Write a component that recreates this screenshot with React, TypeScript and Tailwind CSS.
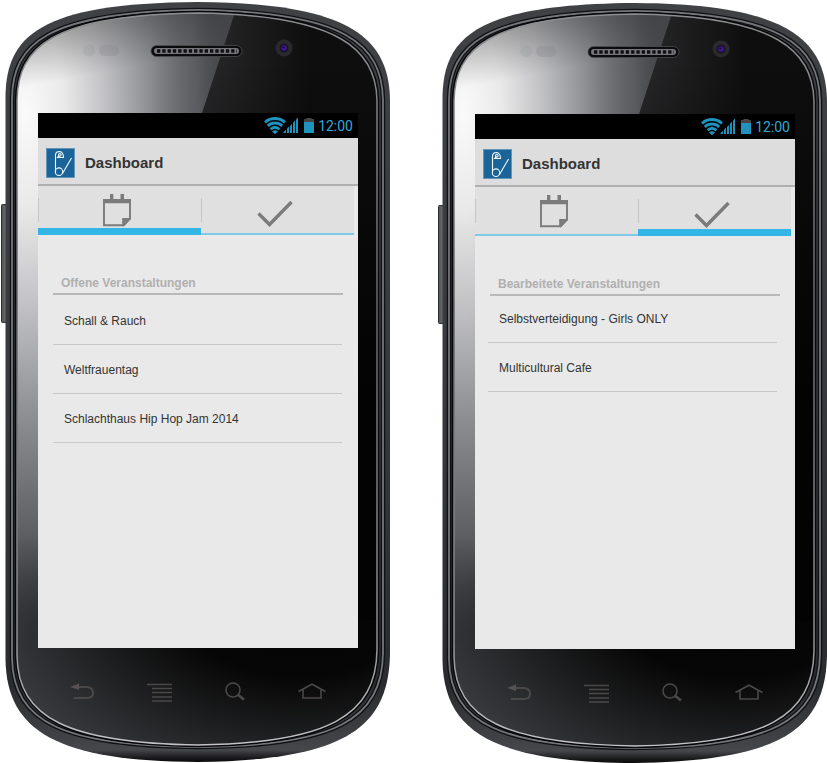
import { useId, useState } from "react";

type TabKey = "open" | "done";

const LISTS: Record<TabKey, { title: string; label: string; items: string[]; list: string }> = {
  open: {
    title: "Offene Veranstaltungen",
    label: "Offen",
    items: ["Schall & Rauch", "Weltfrauentag", "Schlachthaus Hip Hop Jam 2014"],
    list: "mt-px mr-4 ml-[15px]",
  },
  done: {
    title: "Bearbeitete Veranstaltungen",
    label: "Bearbeitet",
    items: ["Selbstverteidigung - Girls ONLY", "Multicultural Cafe"],
    list: "-mt-0.5 mr-[18px] ml-[13px]",
  },
};

const BODY =
  "M5.500 660 V95 C7 37 38 3 198 2 C350 3 389 38 390 100 V655 C388 728 345 760 198 762 C58 761 7 732 5.500 660 Z";
const RING =
  "M12 658 V98 C13 44 46 12 198 10 C345 12 382 44 383 100 V653 C382 720 335 746 198 747 C65 746 13 723 12 658 Z";
const FACE =
  "M17 656 V100 C18 48 50 15 198 13 C340 15 376 50 377 100 V650 C376 715 330 743 198 745 C68 743 18 718 17 656 Z";

function PhoneBody() {
  const id = useId();
  const u = (n: string) => `url(#${id}${n})`;
  return (
    <svg className="absolute inset-0" width="390" height="762" viewBox="0 0 390 762" aria-hidden="true">
      <defs>
        <linearGradient id={id + "body"} x1="0" y1="0" x2="0" y2="1">
          <stop offset="0" stopColor="#3f4145" />
          <stop offset="0.5" stopColor="#38393e" />
          <stop offset="0.9" stopColor="#2a2b2e" />
          <stop offset="0.984" stopColor="#46474b" />
          <stop offset="0.994" stopColor="#1c1c1e" />
          <stop offset="1" stopColor="#0a0a0b" />
        </linearGradient>
        <linearGradient id={id + "side"} x1="0" y1="0" x2="1" y2="0">
          <stop offset="0" stopColor="#4d5252" />
          <stop offset="1" stopColor="#737a79" />
        </linearGradient>
        <radialGradient
          id={id + "gloss"}
          gradientUnits="userSpaceOnUse"
          cx="0"
          cy="0"
          r="1"
          gradientTransform="translate(26 112) scale(215 530)"
        >
          <stop offset="0" stopColor="#fafafa" />
          <stop offset="0.18" stopColor="#e9e9e9" />
          <stop offset="0.36" stopColor="#c3c3c6" />
          <stop offset="0.58" stopColor="#8b8d91" />
          <stop offset="0.8" stopColor="#5c5e62" />
          <stop offset="1" stopColor="#38393c" stopOpacity="0" />
        </radialGradient>
        <linearGradient id={id + "shade"} gradientUnits="userSpaceOnUse" x1="80" y1="10" x2="92" y2="75">
          <stop offset="0" stopColor="#000" stopOpacity="0.35" />
          <stop offset="1" stopColor="#000" stopOpacity="0" />
        </linearGradient>
        <radialGradient
          id={id + "base"}
          gradientUnits="userSpaceOnUse"
          cx="0"
          cy="0"
          r="1"
          gradientTransform="translate(300 580) scale(340 240)"
        >
          <stop offset="0" stopColor="#030303" />
          <stop offset="0.4" stopColor="#060606" />
          <stop offset="0.75" stopColor="#27282a" />
          <stop offset="1" stopColor="#3e3f43" />
        </radialGradient>
        <linearGradient id={id + "top"} gradientUnits="userSpaceOnUse" x1="200" y1="0" x2="310" y2="0">
          <stop offset="0" stopColor="#29292b" />
          <stop offset="1" stopColor="#0e0e0e" />
        </linearGradient>
        <linearGradient id={id + "night"} gradientUnits="userSpaceOnUse" x1="0" y1="60" x2="0" y2="390">
          <stop offset="0" stopColor="#030303" stopOpacity="0" />
          <stop offset="1" stopColor="#030303" />
        </linearGradient>
        <linearGradient id={id + "reflect"} gradientUnits="userSpaceOnUse" x1="150" y1="0" x2="239" y2="0">
          <stop offset="0" stopColor="#5a5b60" stopOpacity="0" />
          <stop offset="1" stopColor="#55565b" stopOpacity="0.75" />
        </linearGradient>
        <linearGradient id={id + "rim"} x1="0" y1="0" x2="0" y2="1">
          <stop offset="0" stopColor="#8d8e92" />
          <stop offset="0.4" stopColor="#66676d" />
          <stop offset="0.85" stopColor="#8e8f94" />
          <stop offset="1" stopColor="#c4c4c8" />
        </linearGradient>
        <clipPath id={id + "clip"}>
          <path d={FACE} />
        </clipPath>
      </defs>

      {/* volume rocker */}
      <rect x="1.500" y="204.500" width="6" height="118" rx="1" fill={u("side")} stroke="#2d2f30" />

      <path d={BODY} fill={u("body")} />
      <path d={RING} fill="none" stroke="#101114" strokeWidth="4.500" />
      <path d={RING} fill="none" stroke="#75767b" strokeWidth="1.800" />
      <path d={FACE} fill="#0a0a0c" stroke="#08080a" strokeWidth="4.500" />
      <path d={FACE} fill={u("base")} />

      <g clipPath={u("clip")}>
        <path d="M0 0 H390 V580 H190 V130 H0 Z" fill={u("top")} />
        <path d="M190 0 H390 V620 H190 Z" fill={u("night")} />
        <path d="M0 0 H239 L199 122 L38 400 V700 H0 Z" fill={u("gloss")} />
        <path d="M0 0 H239 L199 122 H0 Z" fill={u("shade")} />
        <path d="M150 0 H239 L199 122 H150 Z" fill={u("reflect")} />
      </g>
      <path d={FACE} fill="none" stroke={u("rim")} strokeWidth="1.500" />

      {/* proximity sensors */}
      <circle cx="89" cy="50.500" r="6" fill="#8e8f93" opacity="0.2" />
      <rect x="99" y="45" width="20" height="11" rx="5.500" fill="#77787c" opacity="0.2" />

      {/* ear piece */}
      <rect x="151" y="45.500" width="91" height="11" rx="5.500" fill="#0b0b0d" stroke="#4d4e52" strokeWidth="0.800" />
      <rect x="154" y="48" width="85" height="6" rx="3" fill="#77777b" />
      <path d="M157 51 H237" stroke="#101012" strokeWidth="3.400" strokeDasharray="3.300 2" />

      {/* front camera */}
      <circle cx="284" cy="48" r="8.500" fill="#2a2a2d" />
      <circle cx="284" cy="48" r="4.500" fill="#19142c" />
      <circle cx="284" cy="48" r="2.600" fill="#43189e" />
      <circle cx="283.500" cy="47.500" r="1" fill="#0c0624" />
    </svg>
  );
}

function StatusBar() {
  return (
    <div className="flex h-[25px] items-start justify-end bg-black pr-[5px]">
      <svg width="52" height="25" viewBox="264 113 52 25" aria-hidden="true">
        <g fill="none" stroke="#1f93bd" strokeWidth="2.900">
          <path d="M265 122.300 C271 117.300 279 117.300 285 122.300" />
          <path d="M267.800 125.800 C272 122 278 122 282.200 125.800" />
          <path d="M270.600 129.200 C273.500 126.500 276.500 126.500 279.400 129.200" />
        </g>
        <path d="M272 131.500 Q275 129.200 278 131.500 L275 134.300 Z" fill="#1f93bd" />
        <g fill="#1f93bd">
          <path d="M283.500 133 V132 L286 129.800 V133 Z" />
          <path d="M287 133 V128.500 L289 126.500 V133 Z" />
          <path d="M290 133 V126 L292 124 V133 Z" />
          <path d="M293 133 V122.500 L295 120.500 V133 Z" />
          <path d="M296 133 V119.500 L298 117.500 V133 Z" />
          <path d="M304 122 H314 V133 H304 Z" />
        </g>
        <path d="M304 122 V119 H306.500 V118 H311.500 V119 H314 V122 Z" fill="#484444" />
      </svg>
      <span className="ml-0.5 font-['Roboto',sans-serif] text-sm leading-[27px] text-[#2fa8d8]">12:00</span>
    </div>
  );
}

function PinLogo() {
  return (
    <svg width="29" height="30" viewBox="0 0 29 30" aria-hidden="true">
      <rect x="0.500" y="0.500" width="28" height="29" fill="#1a6499" stroke="#5b93ba" strokeWidth="0.800" />
      <g fill="none" stroke="#f4fafc" strokeWidth="1.100">
        <path d="M9.500 24 V6.500 Q10 3.500 13.500 3.500 Q17.500 4 17.500 9.500 H11.500 L13 7.800" />
        <circle cx="13.800" cy="6.800" r="1.300" />
        <ellipse cx="13" cy="23.700" rx="3.700" ry="3.800" />
        <path d="M25.500 10 L16.500 25.500" />
      </g>
    </svg>
  );
}

function NoteIcon() {
  return (
    <svg width="28" height="33" viewBox="0 0 28 33" aria-hidden="true">
      <path d="M7 0 H10.300 V5 H7 Z M17.500 0 H21 V5 H17.500 Z M0 5 H28 V9.300 H0 Z" fill="#7b7b7b" />
      <path d="M1 8 V31.300 H20.500 L27 24.500 V8" fill="none" stroke="#7b7b7b" strokeWidth="1.900" />
      <path d="M19.200 32 V24 H28 V24.800 L21 32.200 Z" fill="#7b7b7b" />
    </svg>
  );
}

function TickIcon() {
  return (
    <svg width="36" height="33" viewBox="0 0 36 33" aria-hidden="true">
      <path d="M1.500 19.500 L12.500 30.500 L34.500 8" fill="none" stroke="#7b7b7b" strokeWidth="3.400" />
    </svg>
  );
}

const KEYS = [
  {
    name: "Zurück",
    art: (
      <>
        <path d="M14 15 H25 Q31 15.500 31 21 Q31 26 25 26 H12" strokeWidth="1.900" />
        <path d="M8 15 L17 11.500 V18 Z" fill="#565152" stroke="none" />
      </>
    ),
  },
  { name: "Menü", art: <path d="M8 12.500 H33 M13 16.500 H33 M13 20.500 H33 M13 25 H33 M13 29 H33" /> },
  {
    name: "Suche",
    art: (
      <>
        <circle cx="18" cy="18" r="7" />
        <path d="M22.500 22.500 L29 27.500" strokeWidth="2.800" />
      </>
    ),
  },
  {
    name: "Start",
    art: <path d="M6.500 19.500 L20 12.200 L33.500 19.500 M11 18 V26 H29 V18" />,
  },
];

function Phone({ initialTab, className = "" }: { initialTab: TabKey; className?: string }) {
  const [active, setActive] = useState<TabKey>(initialTab);
  const panel = useId();
  const current = LISTS[active];
  return (
    <section className={`relative w-[390px] shrink-0 ${className}`}>
      <PhoneBody />
      <div className="relative pt-[113px] pb-[50px]">
        <div className="mr-8 ml-[38px] flex min-h-[535px] flex-col bg-[#e9e9e9]">
          <StatusBar />
          <header className="flex h-12 items-center gap-2.5 border-b-2 border-[#b0b0b0] bg-[#dddddd] pt-1 pl-2">
            <PinLogo />
            <h1 className="text-[15px] font-bold text-[#333333]">Dashboard</h1>
          </header>
          <div role="tablist" className="mr-1 flex h-[49px] bg-[#e0e0e0]">
            {(["open", "done"] as const).map((key) => (
              <button
                key={key}
                role="tab"
                type="button"
                aria-label={LISTS[key].label}
                aria-selected={active === key}
                aria-controls={panel}
                onClick={() => setActive(key)}
                className={`flex flex-col ${key === "open" ? "w-[163px]" : "flex-1"}`}
              >
                <span className="flex w-full flex-1 items-start pt-2">
                  <span className="mt-1 h-6 w-px bg-[#c6c6c6]" />
                  <span className="flex flex-1 justify-center pr-1.5">
                    {key === "open" ? <NoteIcon /> : <TickIcon />}
                  </span>
                </span>
                <span className={`w-full ${active === key ? "h-[7px] bg-[#33b5e5]" : "h-0.5 bg-[#7fcae6]"}`} />
              </button>
            ))}
          </div>
          <div role="tabpanel" id={panel} className="pt-[39px]">
            <h2 className="mr-[15px] ml-[15px] h-[21px] border-b-2 border-[#b9b9b9] pl-2 text-xs leading-[18px] font-bold text-[#b0b0b0]">
              {current.title}
            </h2>
            <ul className={current.list}>
              {current.items.map((item) => (
                <li
                  key={item}
                  className="flex h-[49px] items-center border-b border-[#c8c8c8] pt-0.5 pl-[11px] text-xs text-[#333333]"
                >
                  {item}
                </li>
              ))}
            </ul>
          </div>
        </div>
        <nav className="mt-6 mr-[58px] ml-[62px] flex justify-between">
          {KEYS.map((k) => (
            <button key={k.name} type="button" aria-label={k.name} className="size-10">
              <svg width="40" height="40" viewBox="0 0 40 40" fill="none" stroke="#4b4848" strokeWidth="1.600">
                {k.art}
              </svg>
            </button>
          ))}
        </nav>
      </div>
    </section>
  );
}

export default function App() {
  return (
    <main className="flex justify-center gap-[47px] bg-white font-['Liberation_Sans',Arial,sans-serif]">
      <Phone initialTab="open" />
      <Phone initialTab="done" className="mt-px" />
    </main>
  );
}
